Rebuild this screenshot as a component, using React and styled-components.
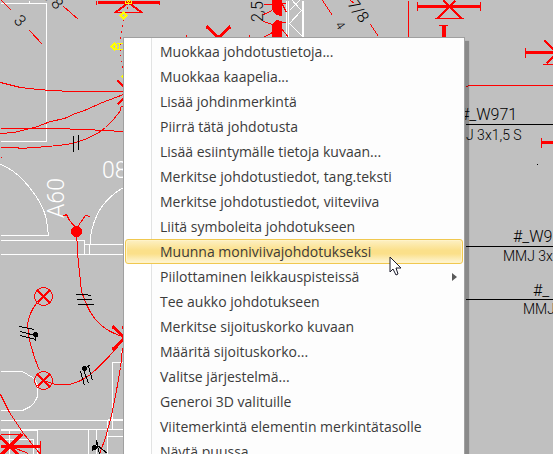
import React, { useState } from 'react';
import styled, { createGlobalStyle } from 'styled-components';

const GlobalStyle = createGlobalStyle`
	body {
		margin: 0;
		background-color: #c0c0c0;
		overflow: hidden;
	}
`

const Workspace = styled.main`
	position: relative;
	min-height: 100vh;
	overflow: hidden;
	background-color: #c0c0c0;
`

const Drawing = styled.svg`
	position: absolute;
	top: 0;
	left: 0;
	width: 100%;
	height: 100%;
	fill: none;
	overflow: visible;
	shape-rendering: crispEdges;
`

const Label = styled.text`
	font-family: Roboto, 'Liberation Sans', sans-serif;
	font-weight: 300;
	font-size: ${props => props.$size || 16}px;
	fill: ${props => props.$color || '#000'};
`

const ContextMenu = styled.div`
	position: absolute;
	top: 37px;
	left: 123px;
	display: flex;
	flex-direction: column;
	box-sizing: border-box;
	width: 342px;
	padding: 1px;
	border: 1px solid #a0a0a0;
	background: linear-gradient(to right, #fff 27px, #e2e3e3 27px, #e2e3e3 28px, #fdfdfd 28px);
	box-shadow: 4px 4px 1px rgba(0, 0, 0, 0.28);
`

const MenuItem = styled.button`
	display: flex;
	align-items: center;
	justify-content: space-between;
	height: 25px;
	padding: 0 5px 0 34px;
	border: 1px solid ${props => props.$active ? '#f0c850' : 'transparent'};
	border-radius: 3px;
	background: ${props => props.$active ? 'linear-gradient(#fdf0c4, #fbe08a 45%, #fbe08a 60%, #fef6d8)' : 'none'};
	box-shadow: ${props => props.$active ? 'inset 0 0 0 1px #fff3c8' : 'none'};
	color: #3b3b3b;
	font-family: 'Open Sans', 'Noto Sans', sans-serif;
	font-size: 14px;
	line-height: 20px;
	text-align: left;
	white-space: nowrap;
`

const SubmenuArrow = styled.svg`
	width: 5px;
	height: 8px;
	fill: #5a5a5a;
`

const Pointer = styled.svg`
	position: absolute;
	top: 256px;
	left: 389px;
	width: 13px;
	height: 20px;
	pointer-events: none;
`

const items = [
	{ label: 'Muokkaa johdotustietoja...' },
	{ label: 'Muokkaa kaapelia...' },
	{ label: 'Lisää johdinmerkintä' },
	{ label: 'Piirrä tätä johdotusta' },
	{ label: 'Lisää esiintymälle tietoja kuvaan...' },
	{ label: 'Merkitse johdotustiedot, tang.teksti' },
	{ label: 'Merkitse johdotustiedot, viiteviiva' },
	{ label: 'Liitä symboleita johdotukseen' },
	{ label: 'Muunna moniviivajohdotukseksi' },
	{ label: 'Piilottaminen leikkauspisteissä', submenu: true },
	{ label: 'Tee aukko johdotukseen' },
	{ label: 'Merkitse sijoituskorko kuvaan' },
	{ label: 'Määritä sijoituskorko...' },
	{ label: 'Valitse järjestelmä...' },
	{ label: 'Generoi 3D valituille' },
	{ label: 'Viitemerkintä elementin merkintätasolle' },
	{ label: 'Näytä puussa' }
];

const Walls = () => (
	<g stroke='#fff'>
		<path d='M29 0V3M0 3H46V141H0' />
		<path d='M0 164Q13 169 23 180Q43 202 46 220L48 235H0' />
		<path d='M0 240H84V254M84 244H123M0 254H123M89 254L90 236Q92 222 100 208Q109 195 123 187' />
		<path d='M0 371H22L32 377Q37 382 37 387V396Q34 403 30 406L22 410H0' />
		<path d='M0 420H123M107 419H123M0 429H123M112 429V362H123M121 350V361M107 420V454M88 429V454M96 429V454M107 436H123' />
		<path d='M0 430H37V454M0 439H33V454M9 430V454' />
		<path d='M286 0V37M288 0V37' />
		<path strokeWidth='2' d='M302 0V37' />
		<path d='M289 10L299 0M289 -3L301 10L289 23L302 36M301 10L289 23' />
	</g>
)

const Lamp = ({ x, y }) => (
	<g stroke='#f00' transform={`translate(${x} ${y})`}>
		<circle r='9' />
		<path strokeWidth='2' d='M-6 -6L6 6M6 -6L-6 6' />
	</g>
)

const Wiring = () => (
	<g stroke='#f00'>
		<path d='M1 0L11 10M29 30L42 44M63 6L78 19' />
		<path d='M0 82L20 87Q36 89 50 90L73 91H123' />
		<path d='M0 133L14 132L37 126L50 121L64 118L75 113L84 110L102 102L123 94' />
		<path d='M0 128H53L85 129L104 130L123 131' />
		<path d='M0 147H16L20 148L47 146Q60 145 72 143L84 139Q97 134 105 127L113 119L120 110V107L123 105' />
		<path d='M0 157H1' />
		<path strokeWidth='2' d='M117 80L124 87M117 104L124 97' />
		<path strokeDasharray='2 4' d='M127 7L122 22L120 40V52L123 70' />
		<path d='M62 216L66 214L69 220L76 228L80 222L85 215L90 216' />
		<circle cx='76' cy='231' r='5' fill='#f00' />
		<path d='M76 236L77 245V253L79 272L81 291L86 304Q93 320 105 328Q114 334 123 336' />
		<path d='M36 303Q28 313 27 325L29 340L34 357L39 370' />
		<path d='M46 381L55 384H69Q81 381 90 374Q108 358 123 339' />
		<path strokeWidth='3' d='M112 326L124 337M112 349L124 338M121 327H124' />
		<path d='M122 348L120 367L116 390L111 415L105 437L99 454' />
		<path d='M0 394L9 412L23 433L40 454' />
		<path d='M408 0V37M322 0L332 15M350 0L354 3M370 24L378 36M186 34V37M249 34V37' />
		<path d='M465 86H467M467 85H553' />
	</g>
)

const Fixtures = () => (
	<g stroke='#f00'>
		<path strokeWidth='3' d='M97 2H159' />
		<path d='M96 0V4M159 0V4M113 12H142' />
		<path strokeWidth='2' d='M128 2L115 12M128 2L141 12' />
		<path strokeWidth='3' d='M206 26L218 37L230 26' />
		<path fill='#f00' d='M272 0H281V15L276 14L272 9ZM272 24L276 20L281 21V37H272Z' />
		<path d='M263 4H272M263 14L272 10M263 21L272 24M263 37L272 32M281 2L286 12M281 28L288 37M281 3H285M281 22H285' />
		<path strokeWidth='3' d='M417 6H480' />
		<path d='M417 1V10M480 1V10M434 18H463M438 25H447' />
		<path strokeWidth='2' d='M443 0L461 18M455 0L437 18' />
		<path strokeWidth='4' d='M443 25V37' />
		<path strokeWidth='3' d='M525 52H554M541 142H554' />
		<path d='M525 47V57M541 137V147M542 64H553' />
		<path strokeWidth='2' d='M544 40L554 50M546 63L554 55' />
		<path strokeWidth='3' d='M0 446H40M-1 436L21 457M21 434L-1 456' />
		<path d='M40 440V453M0 434H22M10 446L28 453' />
	</g>
)

const Marks = () => (
	<g stroke='#000'>
		<path d='M73 135V151M78 134V149' />
		<path d='M75 294H83L91 295M76 299H91M77 304H93' />
		<path d='M19 326L34 329M20 331L38 336M20 335L35 339M35 334V340' />
		<path d='M80 371L84 385M83 369L88 383M88 366L92 380M84 368L90 364' />
		<path d='M96 440L99 454M97 445L107 453M91 451L97 442' />
		<circle cx='35' cy='334' r='2' fill='#000' />
		<circle cx='84' cy='368' r='2' fill='#000' />
		<circle cx='94' cy='447' r='2' fill='#000' />
		<path d='M465 124H553M465 246H553M465 299H553M536 164H537' />
	</g>
)

const Handles = () => (
	<g stroke='#ff0'>
		<path d='M125 0V3H131V0M126 0H130M127 1L129 3M129 1L127 3' />
		<path strokeWidth='2' d='M123 12L126 15L123 18L120 15Z' />
		<path d='M116 43H124M116 49H124M119 43V49M116 43V49' />
		<path strokeWidth='2' d='M111 46L114 43L116 46L114 49Z' />
		<path fill='#ff0' d='M121 76L123 74V78Z' />
	</g>
)

const Labels = () => (
	<g>
		<Label transform='translate(13 21) rotate(48)'>3</Label>
		<Label transform='translate(46 -1) rotate(48)'>/8</Label>
		<Label transform='translate(347 4) rotate(55)'>7/8</Label>
		<Label transform='translate(335 25) rotate(55)' $size={12}>4</Label>
		<Label transform='translate(263 22) rotate(-90)'>2,5</Label>
		<Label transform='translate(64 218) rotate(-90)' $color='#fff' $size={23}>A60</Label>
		<Label x='102' y='178' $color='#fff' $size={23}>08</Label>
		<Label x='460' y='120'>#_W971</Label>
		<Label x='466' y='140' $size={14}>J 3x1,5 S</Label>
		<Label x='513' y='242'>#_W9</Label>
		<Label x='503' y='261' $size={14}>MMJ 3x1</Label>
		<Label x='533' y='296'>#_</Label>
		<Label x='523' y='314' $size={14}>MMJ</Label>
	</g>
)

const App = () => {

	const [active, setActive] = useState(8);

	return (
		<Workspace>
			<GlobalStyle />
			<Drawing>
				<g transform='translate(0.5 0.5)'>
					<Walls />
					<Wiring />
					<Lamp x={43} y={296} />
					<Lamp x={43} y={380} />
					<Fixtures />
					<Marks />
					<Handles />
				</g>
				<Labels />
			</Drawing>
			<ContextMenu role='menu'>
				{
					items.map(({ label, submenu }, index) => (
						<MenuItem
							key={label}
							type='button'
							role='menuitem'
							aria-haspopup={submenu ? 'menu' : undefined}
							$active={index === active}
							onMouseEnter={() => setActive(index)}
						>
							{label}
							{
								submenu &&
								<SubmenuArrow viewBox='0 0 5 8'>
									<path d='M0 0L5 4L0 8Z' />
								</SubmenuArrow>
							}
						</MenuItem>
					))
				}
			</ContextMenu>
			<Pointer viewBox='0 0 13 20'>
				<path
					d='M1 1V16L4 13L7 19L9 18L7 12H12Z'
					fill='#fff'
					stroke='#1c1c2c'
				/>
			</Pointer>
		</Workspace>
	);
}

export default App;
